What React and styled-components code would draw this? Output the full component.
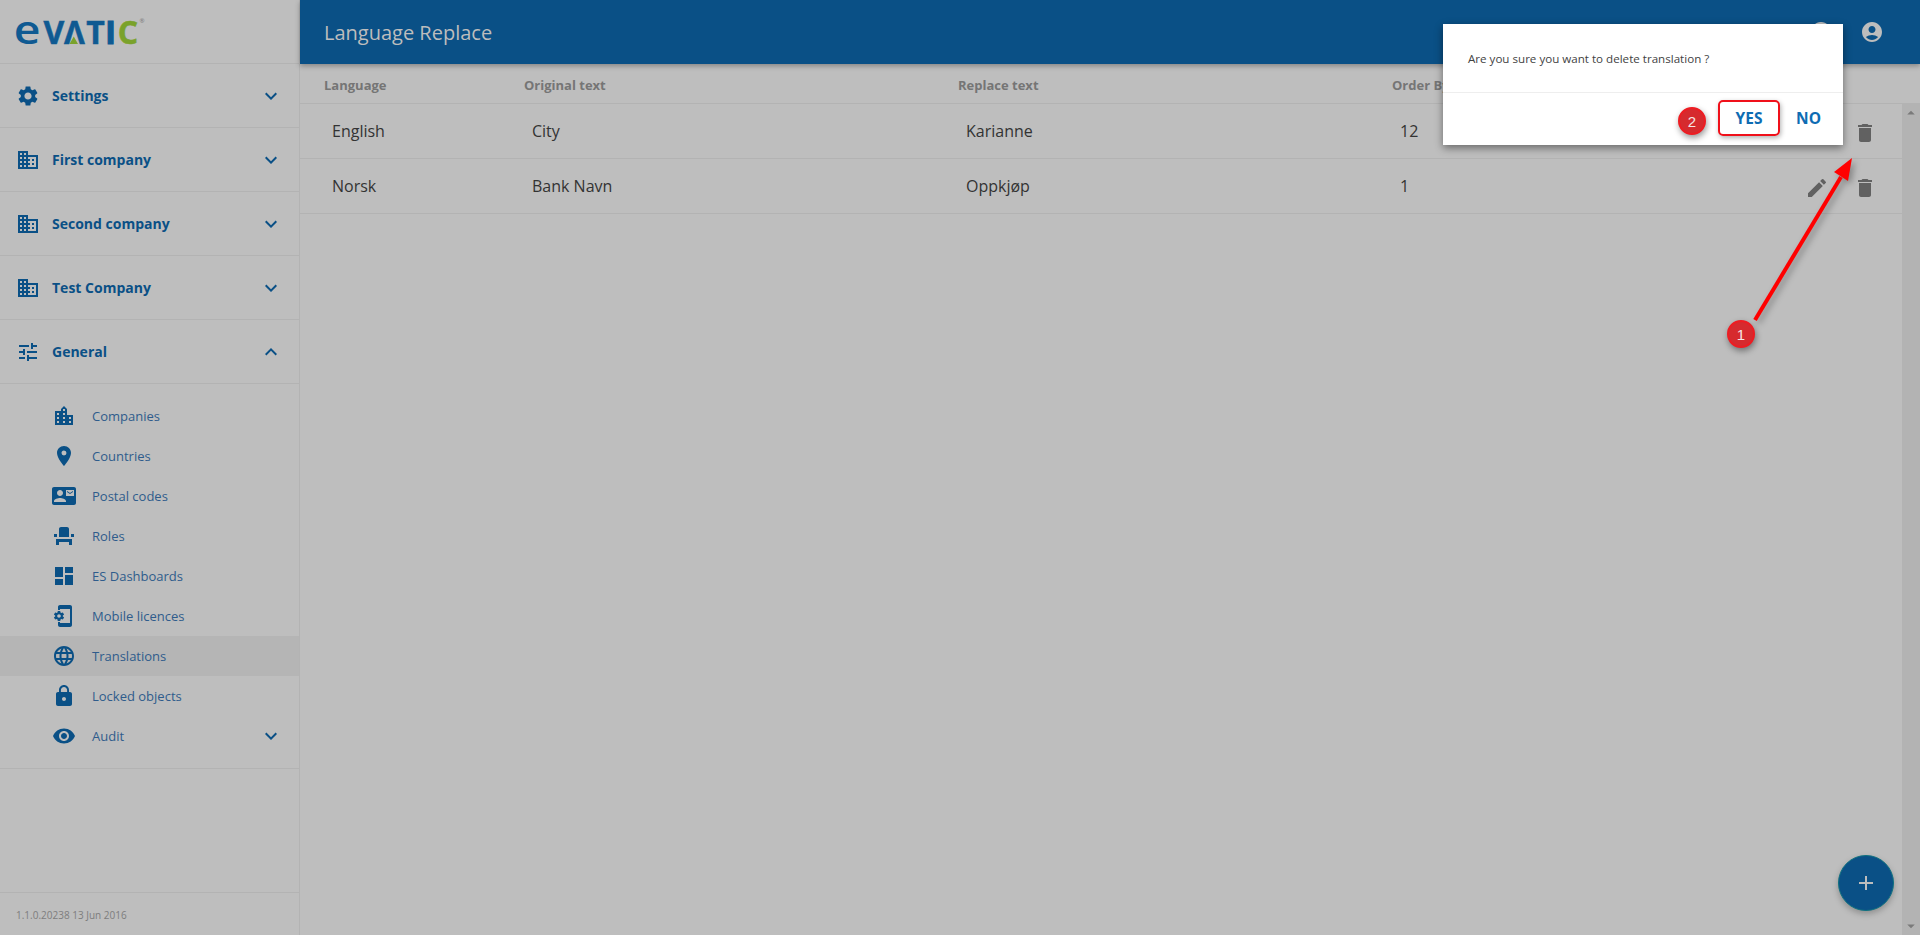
import React from 'react';
import styled, { createGlobalStyle } from 'styled-components';
import {
  MdSettings, MdDomain, MdTune, MdLocationCity, MdPlace, MdContactMail, MdEventSeat, MdDashboard,
  MdPhonelinkSetup, MdLanguage, MdLock, MdRemoveRedEye, MdEdit, MdDelete, MdAccountCircle, MdAdd,
  MdExpandMore, MdExpandLess, MdHelp, MdArrowDropUp, MdArrowDropDown,
} from 'react-icons/md';

const BLUE = '#0a5086';

const Global = createGlobalStyle`
  html, body { margin: 0; padding: 0; height: 100%; overflow: hidden; }
  body { font-family: "Open Sans", sans-serif; background: #bebebe; }
  * { box-sizing: border-box; }
`;

const Page = styled.div`
  position: relative;
  display: flex;
  width: 1920px;
  height: 935px;
  overflow: hidden;
  background: #bebebe;
`;

const Sidebar = styled.aside`
  display: flex;
  flex-direction: column;
  flex: 0 0 300px;
  height: 935px;
  border-right: 1px solid #b3b3b3;
  color: ${BLUE};
`;

const LogoBar = styled.div`
  flex: 0 0 64px;
  border-bottom: 1px solid #b3b3b3;
`;

const LogoMark = styled.svg`
  display: block;
  width: 160px;
  height: 63px;
`;

const NavRow = styled.div`
  flex: 0 0 64px;
  display: flex;
  align-items: center;
  padding: 0 16px;
  border-bottom: 1px solid #b3b3b3;
  font-size: 14px;
  font-weight: 700;
`;

const NavLabel = styled.span`
  flex: 1;
  margin-left: 12px;
`;

const SubMenu = styled.div`
  display: flex;
  flex-direction: column;
  padding: 12px 0;
  border-bottom: 1px solid #b3b3b3;
`;

const SubRow = styled.div`
  height: 40px;
  display: flex;
  align-items: center;
  padding: 0 16px 0 52px;
  font-size: 13px;
  color: #2f5c8c;
  background: ${p => (p.$active ? '#b5b5b5' : 'transparent')};
  svg { color: ${BLUE}; }
`;

const SubLabel = styled.span`
  flex: 1;
  margin-left: 16px;
`;

const Footer = styled.div`
  margin-top: auto;
  height: 43px;
  display: flex;
  align-items: center;
  padding: 2px 16px 0;
  border-top: 1px solid #b3b3b3;
  font-size: 10px;
  color: #7d7d7d;
`;

const Main = styled.main`
  flex: 1;
  display: flex;
  flex-direction: column;
  min-width: 0;
`;

const Header = styled.header`
  flex: 0 0 64px;
  display: flex;
  align-items: center;
  padding: 0 24px;
  background: ${BLUE};
  box-shadow: 0 2px 5px rgba(0, 0, 0, .3);
  color: #bdbdbd;
  position: relative;
  z-index: 1;
`;

const Title = styled.h1`
  flex: 1;
  margin: 0;
  font-size: 20px;
  font-weight: 400;
`;

const HeaderIcons = styled.div`
  display: flex;
  gap: 27px;
  margin-right: 12px;
`;

const GridRow = styled.div`
  display: grid;
  grid-template-columns: 200px 434px 434px 1fr;
  align-items: center;
`;

const HeadRow = styled(GridRow)`
  flex: 0 0 40px;
  padding-left: 24px;
  padding-top: 2px;
  border-bottom: 1px solid #b3b3b3;
  font-size: 13px;
  font-weight: 700;
  color: #757575;
`;

const Content = styled.div`
  flex: 1;
  display: flex;
  min-height: 0;
`;

const Rows = styled.div`
  flex: 1;
`;

const DataRow = styled(GridRow)`
  height: 55px;
  padding-left: 32px;
  padding-right: 25px;
  border-bottom: 1px solid #b3b3b3;
  font-size: 16px;
  color: #333;
`;

const CellRow = styled.div`
  display: flex;
  align-items: center;
  justify-content: space-between;
`;

const Actions = styled.div`
  display: flex;
  justify-content: flex-end;
  gap: 24px;
  color: #616161;
  height: 24px;
  margin-top: 3px;
`;

const ScrollBar = styled.div`
  flex: 0 0 17px;
  display: flex;
  flex-direction: column;
  justify-content: space-between;
  align-items: center;
  background: #b3b3b3;
  color: #7a7a7a;
`;

const Fab = styled.button`
  position: absolute;
  left: 1838px;
  top: 855px;
  width: 56px;
  height: 56px;
  border-radius: 50%;
  border: 1px solid #0f7280;
  background: ${BLUE};
  color: #bdbdbd;
  display: flex;
  align-items: center;
  justify-content: center;
  padding: 0;
  box-shadow: 0 3px 6px rgba(0, 0, 0, .25);
`;

const Dialog = styled.div`
  position: absolute;
  left: 1443px;
  top: 24px;
  width: 400px;
  height: 121px;
  display: flex;
  flex-direction: column;
  background: #fff;
  box-shadow: 0 3px 8px rgba(0, 0, 0, .45);
  z-index: 2;
`;

const DialogBody = styled.div`
  flex: 0 0 69px;
  display: flex;
  align-items: center;
  padding: 0 25px;
  border-bottom: 1px solid #eee;
  font-size: 11.6px;
  color: #424242;
`;

const DialogActions = styled.div`
  flex: 1;
  display: flex;
  align-items: center;
  justify-content: flex-end;
  gap: 16px;
  padding: 0 22px 3px 0;
`;

const DialogButton = styled.span`
  font-size: 15.5px;
  font-weight: 700;
  color: #0e6cb3;
`;

const Highlight = styled.div`
  width: 62px;
  height: 36px;
  display: flex;
  align-items: center;
  justify-content: center;
  border: 2px solid #f0101a;
  border-radius: 5px;
  box-shadow: 1px 2px 5px rgba(0, 0, 0, .3);
`;

const Badge = styled.div`
  position: absolute;
  left: ${p => p.$x - 14}px;
  top: ${p => p.$y - 14}px;
  width: 28px;
  height: 28px;
  border-radius: 50%;
  border: 2px solid #ee1c22;
  background: #d62a2e;
  color: #f5e5e5;
  display: flex;
  align-items: center;
  justify-content: center;
  font-family: "Liberation Sans", sans-serif;
  font-size: 15px;
  box-shadow: 1px 3px 6px rgba(0, 0, 0, .4);
  z-index: 4;
`;

const ArrowLayer = styled.svg`
  position: absolute;
  left: 1740px;
  top: 140px;
  width: 130px;
  height: 200px;
  z-index: 3;
  overflow: visible;
  filter: drop-shadow(3px 3px 3px rgba(0, 0, 0, .3));
`;

const LOGO_BLUE = '#0f5a92';
const LOGO_GREEN = '#7aa22b';

const Logo = () => (
  <LogoMark viewBox="0 0 160 63">
    <g fontFamily="'Open Sans', sans-serif" fontWeight="700" textAnchor="middle" fill={LOGO_BLUE}>
      <text transform="translate(27 43.5) scale(1.16 1)" fontSize="40" fontWeight="600">e</text>
      <text x="54" y="43.5" fontSize="32" stroke={LOGO_BLUE} strokeWidth=".5">V</text>
      <text x="74.5" y="43.5" fontSize="32" stroke={LOGO_BLUE} strokeWidth=".5">Λ</text>
      <polygon points="69.5,44 73.8,36.5 78,44" fill={LOGO_GREEN} />
      <text x="95.5" y="43.5" fontSize="32" stroke={LOGO_BLUE} strokeWidth=".5">T</text>
      <text x="110.5" y="43.5" fontSize="32" stroke={LOGO_BLUE} strokeWidth="1.2">I</text>
      <text x="128" y="43.5" fontSize="32" fill={LOGO_GREEN} stroke={LOGO_GREEN} strokeWidth=".5">C</text>
      <text x="142" y="23" fontSize="6" fontWeight="400" fill="#777">®</text>
    </g>
  </LogoMark>
);

const top = [
  [MdSettings, 'Settings'],
  [MdDomain, 'First company'],
  [MdDomain, 'Second company'],
  [MdDomain, 'Test Company'],
];

const sub = [
  [MdLocationCity, 'Companies'],
  [MdPlace, 'Countries'],
  [MdContactMail, 'Postal codes'],
  [MdEventSeat, 'Roles'],
  [MdDashboard, 'ES Dashboards'],
  [MdPhonelinkSetup, 'Mobile licences'],
  [MdLanguage, 'Translations', true],
  [MdLock, 'Locked objects'],
  [MdRemoveRedEye, 'Audit', false, true],
];

const rows = [
  ['English', 'City', 'Karianne', '12'],
  ['Norsk', 'Bank Navn', 'Oppkjøp', '1'],
];

function OrderCell({ value }) {
  return (
    <CellRow>
      <span>{value}</span>
      <Actions>
        <MdEdit size={24} />
        <MdDelete size={24} />
      </Actions>
    </CellRow>
  );
}

export default function App() {
  return (
    <Page>
      <Global />
      <Sidebar>
        <LogoBar><Logo /></LogoBar>
        {top.map(([Icon, label]) => (
          <NavRow key={label}>
            <Icon size={24} />
            <NavLabel>{label}</NavLabel>
            <MdExpandMore size={24} />
          </NavRow>
        ))}
        <NavRow>
          <MdTune size={24} />
          <NavLabel>General</NavLabel>
          <MdExpandLess size={24} />
        </NavRow>
        <SubMenu>
          {sub.map(([Icon, label, active, more]) => (
            <SubRow key={label} $active={active}>
              <Icon size={24} />
              <SubLabel>{label}</SubLabel>
              {more && <MdExpandMore size={24} />}
            </SubRow>
          ))}
        </SubMenu>
        <Footer>1.1.0.20238 13 Jun 2016</Footer>
      </Sidebar>
      <Main>
        <Header>
          <Title>Language Replace</Title>
          <HeaderIcons>
            <MdHelp size={24} />
            <MdAccountCircle size={24} />
          </HeaderIcons>
        </Header>
        <HeadRow>
          <span>Language</span>
          <span>Original text</span>
          <span>Replace text</span>
          <span>Order By</span>
        </HeadRow>
        <Content>
          <Rows>
            {rows.map(r => (
              <DataRow key={r[0]}>
                <span>{r[0]}</span>
                <span>{r[1]}</span>
                <span>{r[2]}</span>
                <OrderCell value={r[3]} />
              </DataRow>
            ))}
          </Rows>
          <ScrollBar>
            <MdArrowDropUp size={18} />
            <MdArrowDropDown size={18} />
          </ScrollBar>
        </Content>
      </Main>
      <Fab><MdAdd size={24} /></Fab>
      <Dialog>
        <DialogBody>Are you sure you want to delete translation ?</DialogBody>
        <DialogActions>
          <Highlight><DialogButton>YES</DialogButton></Highlight>
          <DialogButton>NO</DialogButton>
        </DialogActions>
      </Dialog>
      <ArrowLayer viewBox="0 0 130 200">
        <line x1="15" y1="180" x2="101" y2="37" stroke="#ff0000" strokeWidth="4" />
        <polygon points="112,18 94,32 108,41" fill="#ff0000" />
      </ArrowLayer>
      <Badge $x={1741} $y={334}>1</Badge>
      <Badge $x={1692} $y={121}>2</Badge>
    </Page>
  );
}
